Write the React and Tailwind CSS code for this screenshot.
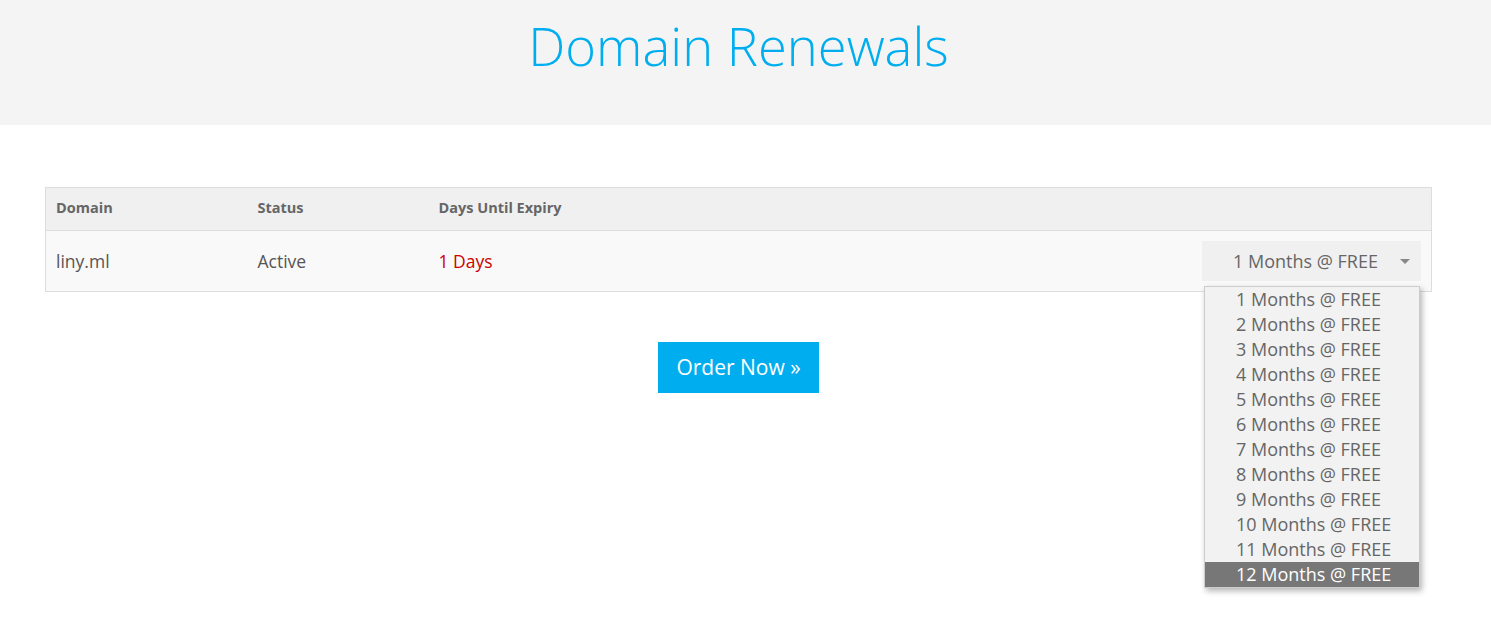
import React from 'react';

const options = Array.from({ length: 12 }, (_, i) => `${i + 1} Months @ FREE`);

const App = () => {
  return (
    <div className="min-h-screen bg-white font-['Open_Sans',sans-serif] text-[#555]">
      <div className="h-[125px] bg-[#f4f4f4]">
        <h1 className="ml-[45px] w-[1387px] pt-[11px] text-center text-[52.5px] font-light leading-[70px] text-[#00aeef]">Domain Renewals</h1>
      </div>

      <div className="ml-[45px] w-[1387px] pt-[62px]">
        <table className="w-full border-collapse border border-[#ddd] text-left">
          <thead>
            <tr className="h-[43px] bg-[#f0f0f0] border-b border-[#ddd]">
              <th className="w-[202px] pl-[10px] pb-[3px] text-[14.5px] font-bold text-[#666]">Domain</th>
              <th className="w-[181px] pl-[10px] pb-[3px] text-[14.5px] font-bold text-[#666]">Status</th>
              <th className="pl-[10px] pb-[3px] text-[14.5px] font-bold text-[#666]">Days Until Expiry</th>
              <th></th>
            </tr>
          </thead>
          <tbody>
            <tr className="h-[61px] bg-[#f9f9f9]">
              <td className="pl-[10px] text-[17.5px]">liny.ml</td>
              <td className="pl-[10px] text-[17.5px]">Active</td>
              <td className="pl-[10px] text-[17.5px] text-[#cc0000]">1 Days</td>
              <td className="pr-[10px]">
                <div className="relative ml-auto w-[219px]">
                  <div className="h-[40px] bg-[#f0f0f0] flex items-center pl-[31px] pr-[10px] text-[18px] text-[#666]">
                    <span>1 Months @ FREE</span>
                    <span className="ml-auto mr-[1px] h-0 w-0 border-x-[5px] border-t-[5px] border-x-transparent border-t-[#888]"></span>
                  </div>
                  <ul className="absolute left-[2px] top-[45px] w-[216px] bg-[#f2f2f2] border border-[#ccc] shadow-[2px_3px_6px_rgba(0,0,0,0.3)] z-10">
                    {options.map((o, i) => (
                      <li
                        key={o}
                        className={
                          i === 11
                            ? 'h-[25px] leading-[25px] pl-[31px] text-[18px] bg-[#777] text-white'
                            : 'h-[25px] leading-[25px] pl-[31px] text-[18px] text-[#666]'
                        }
                      >
                        {o}
                      </li>
                    ))}
                  </ul>
                </div>
              </td>
            </tr>
          </tbody>
        </table>

        <div className="flex justify-center mt-[50px]">
          <button className="h-[51px] px-[18px] bg-[#00aeef] text-white text-[21px]">Order Now »</button>
        </div>
      </div>
    </div>
  );
};

export default App;
